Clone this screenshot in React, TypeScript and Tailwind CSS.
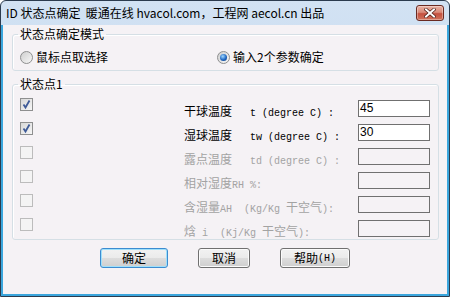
import React from "react";

const CJK = '"Noto Sans CJK SC", "Liberation Sans", sans-serif';
const MONO = '"Liberation Mono", "Noto Sans CJK SC", monospace';

type Seg = { t: string; m?: boolean };

function Label({ segs, disabled }: { segs: Seg[]; disabled?: boolean }) {
  return (
    <div
      className={`ml-[151px] mt-[6px] w-[174px] h-[16px] leading-[16px] whitespace-pre ${
        disabled ? "text-[#a3a3a3]" : "text-black"
      }`}
    >
      {segs.map((s, i) =>
        s.m ? (
          <span key={i} className="text-[10px] leading-[16px]" style={{ fontFamily: MONO }}>
            {s.t}
          </span>
        ) : (
          <span key={i} className="text-[12px] leading-[16px]" style={{ fontFamily: CJK }}>
            {s.t}
          </span>
        )
      )}
    </div>
  );
}

function Check({ checked, disabled }: { checked?: boolean; disabled?: boolean }) {
  return (
    <div
      className={`mt-[2px] w-[13px] h-[13px] border flex items-center justify-center shrink-0 ${
        disabled
          ? "border-[#bcbcbc] bg-[#f4f4f4]"
          : "border-[#8e8f8f] bg-[linear-gradient(135deg,#d8d8d8,#f6f6f6)]"
      }`}
    >
      {checked && (
        <svg width="11" height="11" viewBox="0 0 11 11">
          <path d="M2.5 5.5 L4.5 8.5 L8.5 1.5" fill="none" stroke="#3f5b98" strokeWidth="1.8" />
        </svg>
      )}
    </div>
  );
}

function Radio({ checked }: { checked?: boolean }) {
  return (
    <div className="w-[13px] h-[13px] rounded-full border border-[#8e8f8f] bg-[linear-gradient(135deg,#cfcfcf,#f7f7f7)] flex items-center justify-center shrink-0">
      {checked && (
        <div className="w-[7px] h-[7px] rounded-full bg-[radial-gradient(circle_at_40%_35%,#9fd8ff,#1f66c2_55%,#0c3672)]" />
      )}
    </div>
  );
}

function Row({
  checked,
  disabled,
  segs,
  value,
}: {
  checked?: boolean;
  disabled?: boolean;
  segs: Seg[];
  value?: string;
}) {
  return (
    <div className="flex items-start h-[24px]">
      <Check checked={checked} disabled={disabled} />
      <Label segs={segs} disabled={disabled} />
      <div
        className={`mt-[4px] w-[72px] h-[17px] border border-[#707070] text-[12px] leading-[15px] pl-[1px] text-black ${
          disabled ? "bg-[#f5f2f5]" : "bg-white"
        }`}
        style={{ fontFamily: '"Liberation Sans", sans-serif' }}
      >
        {value}
      </div>
    </div>
  );
}

function Btn({ w, children, def }: { w: string; children: React.ReactNode; def?: boolean }) {
  return (
    <div
      className={`${w} h-[20px] rounded-[3px] border flex items-center justify-center text-[12px] text-black bg-[linear-gradient(#f2f2f2_0%,#ebebeb_50%,#dddddd_50%,#cfcfcf_100%)] ${
        def
          ? "border-[#3c8cd0] shadow-[inset_0_0_0_1px_#9fe0fb]"
          : "border-[#707070] shadow-[inset_0_0_0_1px_#fbfbfb]"
      }`}
      style={{ fontFamily: CJK }}
    >
      {children}
    </div>
  );
}

export default function App() {
  return (
    <div className="w-[450px] h-[297px] flex flex-col border border-[#2b3b4e] rounded-t-[6px] bg-[linear-gradient(#d2e2f3,#bcd3ec)] overflow-hidden">
      {/* Title bar */}
      <div className="h-[24px] flex items-start shrink-0">
        <div
          className="pl-[5px] pt-[4px] leading-[16px] text-[12px] text-black whitespace-pre"
          style={{ fontFamily: CJK }}
        >
          ID 状态点确定  暖通在线 hvacol.com，工程网 aecol.cn 出品
        </div>
        <div className="ml-auto mr-[5px] mt-[4px] w-[28px] h-[16px] rounded-[3px] border border-[#6a2a22] bg-[linear-gradient(#eab2a4_0%,#d98a79_45%,#c4503f_55%,#d0735c_100%)] flex items-center justify-center shadow-[inset_0_0_0_1px_rgba(255,255,255,0.35)]">
          <svg width="12" height="10" viewBox="0 0 12 10">
            <path d="M2 1.5 L10 8.5 M10 1.5 L2 8.5" stroke="#4a1a14" strokeWidth="3.4" strokeLinecap="square" />
            <path d="M2 1.5 L10 8.5 M10 1.5 L2 8.5" stroke="#ffffff" strokeWidth="2" strokeLinecap="square" />
          </svg>
        </div>
      </div>

      {/* Client */}
      <div className="flex-1 border-x-2 border-b-2 border-[#3ba6dd] bg-[#f5f2f5] pl-[9px] pr-[8px] pt-[1px] flex flex-col">
        <fieldset className="h-[45px] border border-[#d5dfe5] rounded-[3px] pl-[7px] shadow-[inset_1px_1px_0_#ffffff]">
          <legend
            className="-ml-[2px] px-[2px] text-[12px] leading-[16px] text-black"
            style={{ fontFamily: CJK }}
          >
            状态点确定模式
          </legend>
          <div className="mt-[7px] h-[16px] flex items-center text-[12px] text-black" style={{ fontFamily: CJK }}>
            <div className="w-[197px] flex items-center gap-[3px]">
              <Radio />
              <span>鼠标点取选择</span>
            </div>
            <div className="flex items-center gap-[3px]">
              <Radio checked />
              <span>输入2个参数确定</span>
            </div>
          </div>
        </fieldset>

        <fieldset className="mt-[5px] h-[164px] border border-[#d5dfe5] rounded-[3px] pl-[7px] shadow-[inset_1px_1px_0_#ffffff]">
          <legend
            className="-ml-[2px] px-[2px] text-[12px] leading-[16px] text-black"
            style={{ fontFamily: CJK }}
          >
            状态点1
          </legend>
          <div className="mt-[4px] flex flex-col">
            <Row checked segs={[{ t: "干球温度" }, { t: "   t (degree C) :", m: true }]} value="45" />
            <Row checked segs={[{ t: "湿球温度" }, { t: "   tw (degree C) :", m: true }]} value="30" />
            <Row disabled segs={[{ t: "露点温度" }, { t: "   td (degree C) :", m: true }]} />
            <Row disabled segs={[{ t: "相对湿度" }, { t: "RH %:", m: true }]} />
            <Row disabled segs={[{ t: "含湿量" }, { t: "AH  (Kg/Kg ", m: true }, { t: "干空气" }, { t: "):", m: true }]} />
            <Row disabled segs={[{ t: "焓" }, { t: " i  (Kj/Kg ", m: true }, { t: "干空气" }, { t: "):", m: true }]} />
          </div>
        </fieldset>

        <div className="mt-[8px] pl-[88px] flex items-center gap-[30px]">
          <Btn w="w-[68px]" def>
            确定
          </Btn>
          <Btn w="w-[52px]">取消</Btn>
          <Btn w="w-[70px]">
            帮助<span className="text-[10px]" style={{ fontFamily: MONO }}>(H)</span>
          </Btn>
        </div>
      </div>
    </div>
  );
}
